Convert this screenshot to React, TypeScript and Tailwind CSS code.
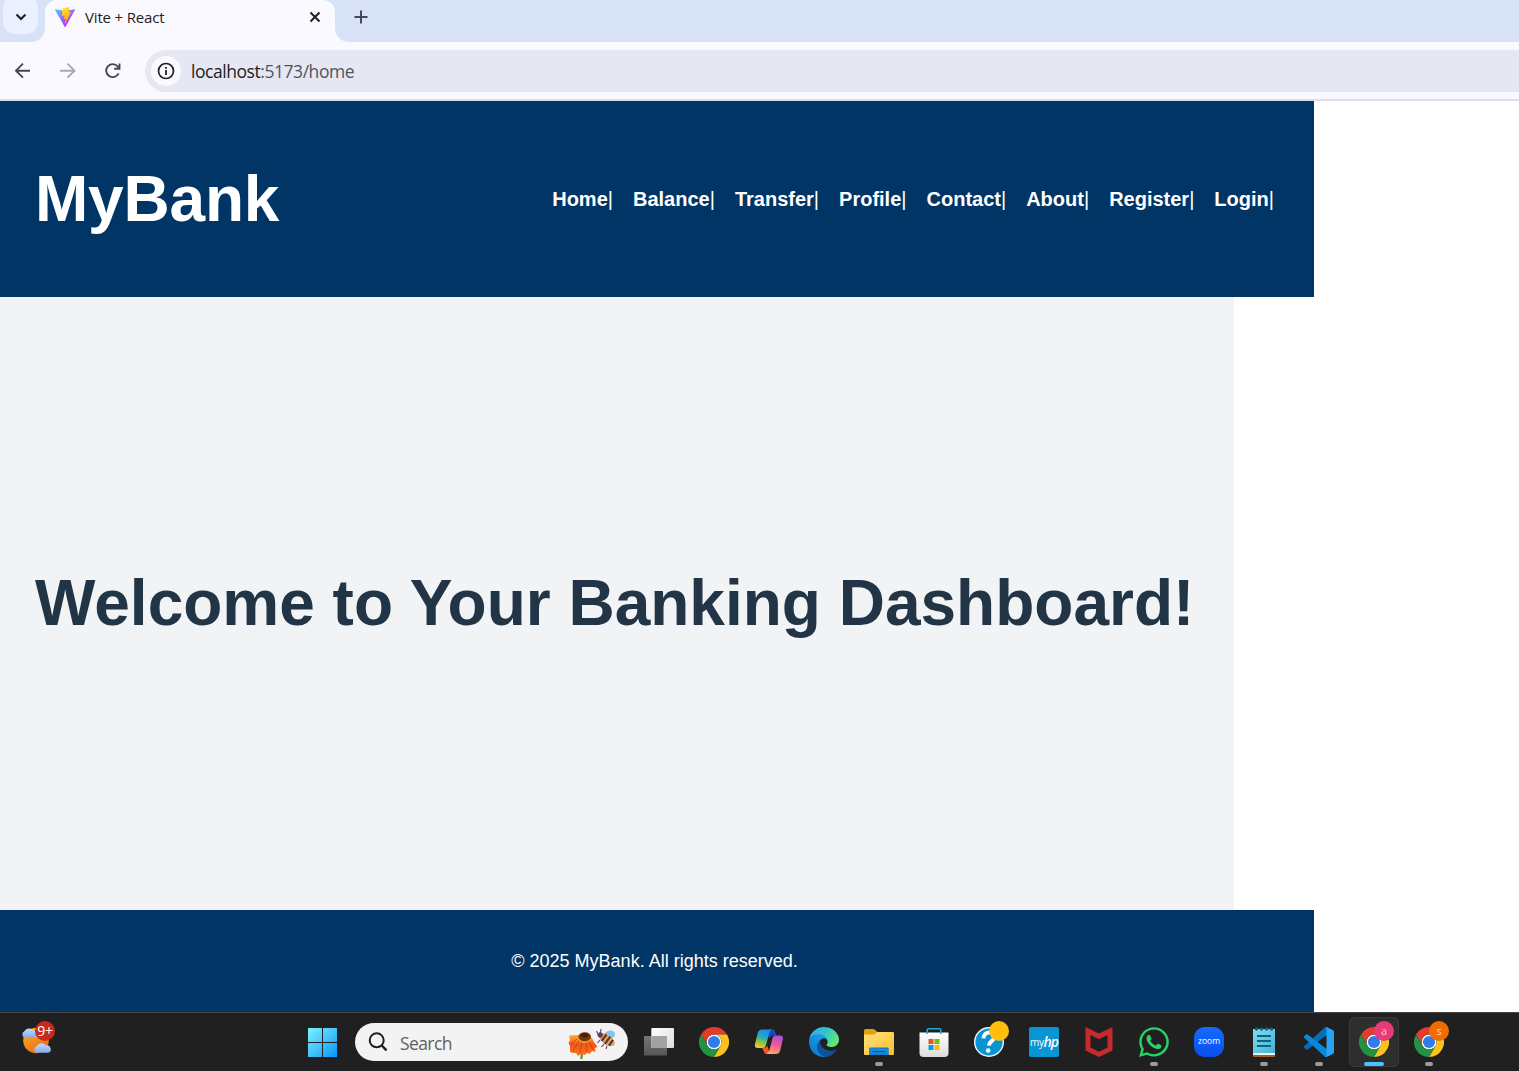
import type { ReactNode } from "react";
import { FaWhatsapp } from "react-icons/fa";

function ViteLogo() {
  return (
    <svg className="-mt-0.5 h-5 w-5" viewBox="0 0 256 257">
      <defs>
        <linearGradient id="viteA" x1="0" x2="0.6" y1="0" y2="0.8">
          <stop offset="0" stopColor="#41D1FF" />
          <stop offset="1" stopColor="#BD34FE" />
        </linearGradient>
        <linearGradient id="viteB" x1="0.4" x2="0.55" y1="0" y2="0.8">
          <stop offset="0" stopColor="#FFEA83" />
          <stop offset="0.1" stopColor="#FFDD35" />
          <stop offset="1" stopColor="#FFA800" />
        </linearGradient>
      </defs>
      <path fill="url(#viteA)" d="M255.153 37.938L134.897 252.976c-2.483 4.44-8.862 4.466-11.382.048L.875 37.958c-2.746-4.814 1.371-10.646 6.827-9.67l120.385 21.517a6.537 6.537 0 0 0 2.322-.004l117.867-21.483c5.438-.991 9.574 4.796 6.877 9.62Z" />
      <path fill="url(#viteB)" d="M185.432.063L96.44 17.501a3.268 3.268 0 0 0-2.634 3.014l-5.474 92.456a3.268 3.268 0 0 0 3.997 3.378l24.777-5.718c2.318-.535 4.413 1.507 3.936 3.838l-7.361 36.047c-.495 2.426 1.782 4.5 4.151 3.78l15.304-4.649c2.372-.72 4.652 1.36 4.15 3.788l-11.698 56.621c-.732 3.542 3.979 5.473 5.943 2.437l1.313-2.028l72.516-144.72c1.215-2.423-.88-5.186-3.54-4.672l-25.505 4.922c-2.396.462-4.435-1.77-3.759-4.114l16.646-57.705c.677-2.35-1.37-4.583-3.769-4.113Z" />
    </svg>
  );
}

function Chrome() {
  return (
    <svg className="h-[30px] w-[30px]" viewBox="0 0 48 48">
      <circle cx="24" cy="24" r="12" fill="#fff" />
      <path fill="#E33B2E" d="M24,12H44.7812a23.9939,23.9939,0,0,0-41.5639.0029L13.6079,30l.0093-.0024A11.9852,11.9852,0,0,1,24,12Z" />
      <path fill="#FCC31E" d="M34.3913,30.0029,24.0007,48A23.994,23.994,0,0,0,44.78,12.0031H23.9989l-.0025.0093A11.985,11.985,0,0,1,34.3913,30.0029Z" />
      <path fill="#229342" d="M13.6086,30.0031,3.218,12.006A23.994,23.994,0,0,0,24.0025,48L34.3931,30.0029l-.0067-.0068a11.9852,11.9852,0,0,1-20.7778.007Z" />
      <circle cx="24" cy="24" r="9.7" fill="#2F7DEB" />
    </svg>
  );
}

function TaskView() {
  return (
    <svg className="h-[30px] w-[30px]" viewBox="0 0 30 30">
      <defs>
        <linearGradient id="tv" x1="0" y1="0" x2="1" y2="1">
          <stop offset="0" stopColor="#fff" />
          <stop offset="1" stopColor="#dcdcdc" />
        </linearGradient>
        <linearGradient id="tvb" x1="0" y1="0" x2="0" y2="1">
          <stop offset="0" stopColor="#777" />
          <stop offset="1" stopColor="#555" />
        </linearGradient>
      </defs>
      <rect x="0" y="9" width="23" height="19.5" rx="1" fill="url(#tvb)" />
      <rect x="7.3" y="1" width="22.7" height="20" rx="1" fill="url(#tv)" />
      <path d="M7.3 9H23V21H8.3a1 1 0 0 1-1-1Z" fill="#a2a2a2" />
    </svg>
  );
}

function Copilot() {
  return (
    <svg className="h-[30px] w-[30px]" viewBox="0 0 30 30">
      <defs>
        <linearGradient id="cpA" x1="0.6" y1="0" x2="0.3" y2="1">
          <stop offset="0" stopColor="#1b8fe8" />
          <stop offset="0.4" stopColor="#21a7c4" />
          <stop offset="0.7" stopColor="#8cc441" />
          <stop offset="1" stopColor="#f5cb25" />
        </linearGradient>
        <linearGradient id="cpB" x1="0.7" y1="0" x2="0.4" y2="1">
          <stop offset="0" stopColor="#a64de5" />
          <stop offset="0.5" stopColor="#ef5a94" />
          <stop offset="1" stopColor="#ffa667" />
        </linearGradient>
      </defs>
      <path d="M15 2.5h3.5q2 0 2.7 2.3L22.300 8.500H19q-2.400 0-3.200 2.500L14 9Z" fill="#1a45bd" />
      <path d="M8 20.500h3q1.600 0 2.200-2l3 8.500H12.500q-2 0-2.600-2.200Z" fill="#ee5a22" />
      <path d="M8 2.500h10q-2 .5-2.700 3.500L12.200 17.500Q11.200 21 8.500 21H3.500Q.3 21 1 17L3.700 6Q4.600 2.500 8 2.500Z" fill="url(#cpA)" />
      <path d="M21 8.500h5q3.700 0 2.900 3.800L26.200 23.500Q25.200 27 21.800 27H12q2.500-.4 3.300-3.200L18.400 11.500Q19.200 8.500 21 8.500Z" fill="url(#cpB)" />
    </svg>
  );
}

function Edge() {
  return (
    <svg className="h-[30px] w-[30px]" viewBox="0 0 256 256">
      <defs>
        <linearGradient id="edA" x1="0" y1="0.5" x2="1" y2="0.5">
          <stop offset="0" stopColor="#0c59a4" />
          <stop offset="1" stopColor="#114a8b" />
        </linearGradient>
        <linearGradient id="edB" x1="0.8" y1="0.2" x2="0.3" y2="1">
          <stop offset="0" stopColor="#1b9de2" />
          <stop offset="1" stopColor="#0d78d0" />
        </linearGradient>
        <linearGradient id="edC" x1="0" y1="0.2" x2="1" y2="0.6">
          <stop offset="0" stopColor="#35a9e8" />
          <stop offset="0.5" stopColor="#31c4d0" />
          <stop offset="1" stopColor="#66eb6e" />
        </linearGradient>
      </defs>
      <path fill="url(#edA)" d="M231 190.5c-3.4 1.8-6.9 3.4-10.5 4.7a101.9 101.9 0 0 1-35.9 6.5c-47.3 0-88.5-32.5-88.5-74.3 0-11.4 6.4-21.9 16.4-27.3-42.8 1.8-53.8 46.4-53.8 72.5 0 73.9 68.1 81.4 82.8 81.4 7.9 0 19.8-2.3 27-4.6l1.3-.4a128.3 128.3 0 0 0 66.6-52.8 4 4 0 0 0-5.4-5.7z" />
      <path fill="url(#edB)" d="M105.7 241.4a79.2 79.2 0 0 1-22.7-21.3 80.7 80.7 0 0 1 29.5-120c3.2-1.5 8.5-4.1 15.6-4a32.4 32.4 0 0 1 25.7 13 31.9 31.9 0 0 1 6.3 18.7c0-.2 24.5-79.6-80-79.6-43.9 0-80 41.7-80 78.2a130.2 130.2 0 0 0 12.1 56 128 128 0 0 0 156.4 67 75.5 75.5 0 0 1-62.8-8z" />
      <path fill="url(#edC)" d="M152.3 148.9c-.9 1-3.4 2.5-3.4 5.6 0 2.6 1.7 5.2 4.8 7.3 14.3 10 41.4 8.6 41.5 8.6a59.6 59.6 0 0 0 30.3-8.3 61.4 61.4 0 0 0 30.4-52.9c.3-22.4-8-37.3-11.3-43.9C223.5 23.9 177.7 0 128 0A128 128 0 0 0 0 126.2c.5-36.5 36.8-66 80-66 3.5 0 23.5.3 42 10 16.3 8.6 24.9 19 30.8 29.2 6.2 10.7 7.3 24.1 7.3 29.5 0 5.3-2.7 13.3-7.8 19.9z" />
    </svg>
  );
}

function Explorer() {
  return (
    <svg className="h-[30px] w-[30px]" viewBox="0 0 30 30">
      <defs>
        <linearGradient id="fe" x1="0" y1="0" x2="1" y2="1">
          <stop offset="0" stopColor="#ffe180" />
          <stop offset="1" stopColor="#f8bf2e" />
        </linearGradient>
        <linearGradient id="feb" x1="0" y1="0" x2="0" y2="1">
          <stop offset="0" stopColor="#0c74c4" />
          <stop offset="0.3" stopColor="#1a90dc" />
          <stop offset="1" stopColor="#137dcb" />
        </linearGradient>
      </defs>
      <path d="M0 3.5Q0 2 1.5 2H9.2q.8 0 1.3.5L13.5 5V10H0Z" fill="#e0a010" />
      <path d="M0 7.4h9.5q1 0 1.7-.7l1-1Q12.8 5 14 5H28.7Q30 5 30 6.3V27q0 1-1 1H1q-1 0-1-1Z" fill="url(#fe)" />
      <path d="M5 28v-6q0-1.500 1.500-1.500h16.800q1.500 0 1.500 1.500v6Z" fill="url(#feb)" />
      <rect x="8.500" y="24" width="13" height="1.100" rx="0.500" fill="#084f91" />
    </svg>
  );
}

function Store() {
  return (
    <svg className="h-[30px] w-[30px]" viewBox="0 0 30 30">
      <defs>
        <linearGradient id="ms" x1="0" y1="0" x2="0" y2="1">
          <stop offset="0" stopColor="#fff" />
          <stop offset="1" stopColor="#dcdcdc" />
        </linearGradient>
      </defs>
      <path d="M0.500 5.500H29.500V26Q29.500 30 25.500 30H4.500Q.5 30 .5 26Z" fill="url(#ms)" />
      <path d="M8.200 7V3q0-1.300 1.300-1.300h11q1.300 0 1.300 1.300V7" fill="none" stroke="#22a7e0" strokeWidth="1.600" />
      <path fill="#F04E23" d="M9.500 12h5v5h-5z" />
      <path fill="#7FB900" d="M15.500 12h5v5h-5z" />
      <path fill="#009FE8" d="M9.500 18h5v5h-5z" />
      <path fill="#FFB900" d="M15.500 18h5v5h-5z" />
    </svg>
  );
}

function Help() {
  return (
    <svg className="h-[30px] w-[30px]" viewBox="0 0 30 30">
      <circle cx="15" cy="15" r="14.300" fill="#0894d3" stroke="#f2f8fb" strokeWidth="1.400" />
      <path d="M9.500 11.300c.3-4 3-6 6.300-5.800 3.600.2 5.200 2.500 4.500 5.200-.9 3.200-5.200 3.700-5.500 8" fill="none" stroke="#fff" strokeWidth="4" />
      <circle cx="14.200" cy="23.500" r="2.300" fill="#fff" />
    </svg>
  );
}

function MyHp() {
  return (
    <div className="flex h-[30px] w-[30px] items-center justify-center rounded-[2px] bg-[#0795d4] font-['Open_Sans',sans-serif] text-[10px] leading-none text-white">
      <span className="tracking-[-0.3px]">my</span>
      <span className="text-[14px] font-semibold italic tracking-[-1px]">hp</span>
    </div>
  );
}

function McAfee() {
  return (
    <svg className="h-[30px] w-[30px]" viewBox="0 0 30 30">
      <path fill="#c52b2c" fillRule="evenodd" d="M1.500 0 15 6.500 28.500 0V23.500L15 30 1.500 23.500ZM6.500 8V20.500L15 24.700 23.500 20.500V8L15 12.200Z" />
    </svg>
  );
}

function Zoom() {
  return (
    <div className="flex h-[30px] w-[30px] items-center justify-center rounded-[11px] bg-linear-to-b from-[#1769ff] to-[#0850ee] pb-[2px] font-['Open_Sans',sans-serif] text-[8.5px] font-medium leading-none text-white">
      zoom
    </div>
  );
}

function Notepad() {
  return (
    <svg className="h-[30px] w-[30px]" viewBox="0 0 30 30">
      <defs>
        <linearGradient id="np" x1="0" y1="0" x2="1" y2="1">
          <stop offset="0" stopColor="#83dcf0" />
          <stop offset="1" stopColor="#42b3d4" />
        </linearGradient>
      </defs>
      <path d="M4 26H26v3q0 1-1 1H5q-1 0-1-1Z" fill="#a85d22" />
      <path d="M4 3q0-1 1-1H25q1 0 1 1V28H4Z" fill="#edf0f1" />
      <path d="M4 3q0-1 1-1H25q1 0 1 1V26H4Z" fill="url(#np)" />
      <g fill="#0a6584">
        <circle cx="7.500" cy="2" r="1.700" />
        <circle cx="12.500" cy="2" r="1.700" />
        <circle cx="17.500" cy="2" r="1.700" />
        <circle cx="22.500" cy="2" r="1.700" />
        <path d="M8 8h14v2H8zM8 13h14v2H8zM8 18h14v2H8z" />
      </g>
    </svg>
  );
}

function VsCode() {
  return (
    <svg className="h-[30px] w-[30px]" viewBox="0 0 100 100">
      <path fill="#0070b7" d="M96.461 10.796L75.857.876a6.230 6.230 0 0 0-7.107 1.207L1.299 63.583a4.167 4.167 0 0 0 .004 6.162l5.510 5.009a4.167 4.167 0 0 0 5.321.236L93.361 13.370C96.086 11.303 100 13.246 100 16.667v-.24a6.250 6.250 0 0 0-3.539-5.631Z" />
      <path fill="#0987d8" d="M96.461 89.204L75.857 99.124a6.230 6.230 0 0 1-7.107-1.207L1.299 36.417a4.167 4.167 0 0 1 .004-6.162l5.510-5.009a4.167 4.167 0 0 1 5.321-.236L93.361 86.630C96.086 88.697 100 86.754 100 83.333v.24a6.250 6.250 0 0 1-3.539 5.631Z" />
      <path fill="#27a5f4" d="M75.858 99.126a6.232 6.232 0 0 1-7.108-1.210C71.056 100.223 75 98.590 75 95.328V4.672C75 1.410 71.056-.223 68.750 2.083a6.232 6.232 0 0 1 7.108-1.209l20.601 9.907A6.250 6.250 0 0 1 100 16.413v67.174a6.250 6.250 0 0 1-3.541 5.633Z" />
    </svg>
  );
}

function Weather() {
  return (
    <svg className="h-[28px] w-[32px]" viewBox="0 0 32 28">
      <defs>
        <linearGradient id="sun" x1="0" y1="0" x2="0.6" y2="1">
          <stop offset="0" stopColor="#f6b42a" />
          <stop offset="1" stopColor="#ee6d12" />
        </linearGradient>
        <linearGradient id="cl" x1="0" y1="0" x2="0" y2="1">
          <stop offset="0" stopColor="#c3dbfb" />
          <stop offset="1" stopColor="#87a9ea" />
        </linearGradient>
      </defs>
      <circle cx="16" cy="14.500" r="12.800" fill="url(#sun)" />
      <path d="M4.500 11.800A3.600 3.600 0 0 1 4.300 5.300 5.800 5.800 0 0 1 14 4.800 3.600 3.600 0 0 1 17 11.800Z" fill="url(#cl)" />
      <path d="M16.500 26.800A3.400 3.400 0 0 1 16.500 20.300 5.500 5.500 0 0 1 26 19.500 3.600 3.600 0 0 1 28 26.800Z" fill="url(#cl)" />
    </svg>
  );
}

function FlowerBee() {
  return (
    <svg className="h-[32px] w-[48px]" viewBox="0 0 48 32">
      <defs>
        <linearGradient id="fl" x1="0" y1="0" x2="0" y2="1">
          <stop offset="0" stopColor="#ffb02e" />
          <stop offset="0.45" stopColor="#f0561a" />
          <stop offset="1" stopColor="#f97a1c" />
        </linearGradient>
      </defs>
      <path d="M12.800 26h2.300l-.6 6h-2.300Z" fill="#5f9a26" />
      <path d="M10 8 1 8.500 2 13 .5 16 2 19 2 25 5 26 8 26 10 29 13 27 17 28 19 26 22 27 24 24 27.500 25 27 21 29.500 20 26 15 24 11 20 9Z" fill="url(#fl)" />
      <path d="M11 14 5 24M14 15l-2 11M18 15l1 10M21 14l4 9M9 12l-6 5" stroke="#d9400f" strokeWidth="1" fill="none" />
      <path d="M10.500 11.500q6 7 12.500 0" stroke="#f7b52c" strokeWidth="2.200" strokeDasharray="1.500 .8" fill="none" />
      <ellipse cx="16.700" cy="9.800" rx="6.300" ry="4.500" fill="#7a3410" />
      <ellipse cx="16.700" cy="8.300" rx="3.600" ry="2.300" fill="#45220c" />
      <path d="M36 8q1-4 6-4.500 5.500 0 5 4.500-1 4-7 3.500Z" fill="#7cc8f5" />
      <g transform="rotate(36 38.500 12.500)">
        <ellipse cx="39" cy="12.500" rx="9" ry="4.800" fill="#efa83e" />
        <path d="M35.500 8.500v8M39.800 8v9M44 9v7" stroke="#51365a" strokeWidth="2.200" />
        <circle cx="30.700" cy="12.500" r="2.600" fill="#5d3b66" />
      </g>
      <path d="M32.500 6 33 2M30 7l-1.500-3M32 13l-2.500 3M36 17l-2.500 3M39 19l-1 3" stroke="#5d3b66" strokeWidth="1.100" fill="none" />
    </svg>
  );
}

type Task = { id: string; icon: ReactNode; running?: boolean; active?: boolean; badge?: ReactNode };

const badgeBase = "absolute left-[28px] top-[8px] flex h-5 w-5 items-center justify-center rounded-full pb-px font-['Open_Sans',sans-serif] text-[11px] font-medium leading-none";

const tasks: Task[] = [
  { id: "view", icon: <TaskView /> },
  { id: "chrome", icon: <Chrome /> },
  { id: "copilot", icon: <Copilot /> },
  { id: "edge", icon: <Edge /> },
  { id: "files", icon: <Explorer />, running: true },
  { id: "store", icon: <Store /> },
  { id: "help", icon: <Help />, badge: <span className={`${badgeBase} bg-[#ffbd0c]`} /> },
  { id: "myhp", icon: <MyHp /> },
  { id: "mcafee", icon: <McAfee /> },
  { id: "whatsapp", icon: <FaWhatsapp className="h-[34px] w-[34px] shrink-0 text-[#25d366]" />, running: true },
  { id: "zoom", icon: <Zoom /> },
  { id: "notepad", icon: <Notepad />, running: true },
  { id: "code", icon: <VsCode />, running: true },
  { id: "chrome-a", icon: <Chrome />, active: true, badge: <span className={`${badgeBase} bg-[#e93a78] text-[#ffc4d8]`}>a</span> },
  { id: "chrome-s", icon: <Chrome />, running: true, badge: <span className={`${badgeBase} bg-[#ef6c00] text-[#ffd5ae]`}>s</span> },
];

function TaskItem({ task }: { task: Task }) {
  return (
    <div className="relative flex h-[58px] w-[55px] shrink-0 pl-[13px] pt-[14px]">
      {task.active && <span className="absolute left-[3px] top-1 h-[50px] w-[50px] rounded-[5px] border border-[#3a3a3a] bg-[#2e2e2e]" />}
      <div className="relative flex h-[30px] w-[30px] items-center justify-center">{task.icon}</div>
      {task.badge}
      {task.running && <span className="absolute left-[24px] top-[49px] h-1 w-2 rounded-full bg-[#9d9b9b]" />}
      {task.active && <span className="absolute left-[18px] top-[49px] h-1 w-5 rounded-full bg-[#4cc2ff]" />}
    </div>
  );
}

const links = ["Home", "Balance", "Transfer", "Profile", "Contact", "About", "Register", "Login"];

export default function App() {
  return (
    <div className="flex h-[1071px] w-[1519px] flex-col overflow-hidden bg-white font-['Liberation_Sans',Arial,sans-serif]">
      <div className="flex h-[42px] shrink-0 bg-[#faf9ff]">
        <div className="h-[42px] w-[45px] rounded-br-[14px] bg-[#d8e2f6] pl-[3px]">
          <div className="-mt-1 flex h-[38px] w-[35px] items-center justify-center rounded-[12px] bg-[#eaf0ff]">
            <svg className="mt-1 h-3 w-3" viewBox="0 0 12 12" fill="none" stroke="#1f2022" strokeWidth="2.200"><path d="M1.500 3.500 6 8l4.500-4.500" /></svg>
          </div>
        </div>
        <div className="h-[42px] w-[290px] bg-[#d8e2f6]">
          <div className="flex h-[42px] items-center rounded-t-[12px] bg-[#faf9ff] pb-[7px] pl-[10px] pr-[14px]">
            <ViteLogo />
            <span className="ml-[10px] whitespace-nowrap font-['Open_Sans',sans-serif] text-[15px] tracking-[-0.170px] text-[#1f2022]">Vite + React</span>
            <svg className="-mt-0.5 ml-auto h-3 w-3" viewBox="0 0 12 12" fill="none" stroke="#1f2022" strokeWidth="2"><path d="m1.500 1.500 9 9m0-9-9 9" /></svg>
          </div>
        </div>
        <div className="flex h-[42px] flex-1 rounded-bl-[14px] bg-[#d8e2f6] pl-[19px] pt-[10px]">
          <svg className="h-[14px] w-[14px]" viewBox="0 0 14 14" stroke="#44495a" strokeWidth="2"><path d="M7 .5v13M.5 7h13" /></svg>
        </div>
      </div>

      <div className="flex h-[59px] shrink-0 items-start border-b-2 border-[#dddfe8] bg-[#faf9ff] pl-[13px] pt-2">
        <div className="flex h-[42px] w-[132px] shrink-0 items-center gap-[25px]">
          <svg className="h-5 w-5" viewBox="0 0 20 20" fill="none" stroke="#434856" strokeWidth="1.900"><path d="M17 9.700H3.500M10 2.700 3 9.700l7 7" /></svg>
          <svg className="h-5 w-5" viewBox="0 0 20 20" fill="none" stroke="#a8a8b0" strokeWidth="1.900"><path d="M2 9.700h14M9.500 2.700l7 7-7 7" /></svg>
          <svg className="h-5 w-5" viewBox="0 0 20 20" fill="none" stroke="#434856" strokeWidth="1.900"><path d="M15.600 12.300A6.500 6.500 0 1 1 14.700 5.500L16.300 7.300M16.500 2.500v5.300h-5.300" /></svg>
        </div>
        <div className="flex h-[42px] flex-1 items-center rounded-l-full bg-[#e5e8f3] pl-[6px]">
          <span className="flex h-[30px] w-[30px] items-center justify-center rounded-full bg-[#faf9ff]">
            <svg className="h-[18px] w-[18px]" viewBox="0 0 18 18"><circle cx="9" cy="9" r="7.500" fill="none" stroke="#1f2022" strokeWidth="1.700" /><path fill="#1f2022" d="M8.100 8h1.800v5H8.100zM8.100 5h1.800v1.800H8.100z" /></svg>
          </span>
          <span className="ml-[10px] mt-px whitespace-nowrap font-['Open_Sans',sans-serif] text-[17.5px] tracking-[-0.450px] text-[#1f2022]">
            localhost<span className="text-[#52545c]">:5173/home</span>
          </span>
        </div>
      </div>

      <header className="flex h-[196px] w-[1314px] shrink-0 items-center justify-between bg-[#003566] pl-[35px] pr-10 text-white">
        <h1 className="text-[64px] font-bold leading-none tracking-[-0.200px]">MyBank</h1>
        <nav className="flex gap-5 whitespace-nowrap text-[20px] leading-6">
          {links.map((label) => (
            <span key={label}><a className="font-bold">{label}</a>|</span>
          ))}
        </nav>
      </header>

      <main className="flex h-[613px] w-[1234px] shrink-0 items-center bg-[#f1f3f5] pb-[2px] pl-[35px]">
        <h2 className="whitespace-nowrap text-[64px] font-bold leading-none text-[#213547]">Welcome to Your Banking Dashboard!</h2>
      </main>

      <footer className="flex h-[102px] w-[1314px] shrink-0 items-center justify-center bg-[#003566] pr-[5px] text-[18px] text-white">
        <p>© 2025 MyBank. All rights reserved.</p>
      </footer>

      <div className="flex h-[59px] shrink-0 border-t border-[#454545] bg-[#202020]">
        <div className="relative w-[308px] shrink-0 pl-[20px] pt-[13px]">
          <Weather />
          <span className="absolute left-[35px] top-[8px] flex h-5 w-5 items-center justify-center rounded-full bg-[#c42b1c] font-['Open_Sans',sans-serif] text-[14px] leading-none tracking-[-0.300px] text-white">9+</span>
        </div>
        <svg className="mt-[15px] h-[29px] w-[29px] shrink-0" viewBox="0 0 29 29">
          <defs>
            <linearGradient id="win" gradientUnits="userSpaceOnUse" x1="0" y1="0" x2="29" y2="29">
              <stop offset="0" stopColor="#7eefff" />
              <stop offset="0.500" stopColor="#43c5fc" />
              <stop offset="1" stopColor="#0895fb" />
            </linearGradient>
          </defs>
          <path fill="url(#win)" d="M0 0h14v14H0zM15 0h14v14H15zM0 15h14v14H0zM15 15h14v14H15z" />
        </svg>
        <div className="ml-[18px] mt-[10px] flex h-[38px] w-[273px] shrink-0 items-center rounded-full bg-[#f3f3f3] pl-[13px] pr-[12px]">
          <svg className="h-5 w-5" viewBox="0 0 20 20" fill="none" stroke="#202020" strokeWidth="2"><circle cx="8.700" cy="8.300" r="7" /><path d="m13.800 13.500 4.700 4.800" strokeWidth="2.500" /></svg>
          <span className="ml-3 mt-0.5 font-['Open_Sans',sans-serif] text-[17.5px] tracking-[-0.600px] text-[#606060]">Search</span>
          <span className="ml-auto mt-px"><FlowerBee /></span>
        </div>
        <div className="ml-[3px] flex">
          {tasks.map((task) => <TaskItem key={task.id} task={task} />)}
        </div>
      </div>
    </div>
  );
}
